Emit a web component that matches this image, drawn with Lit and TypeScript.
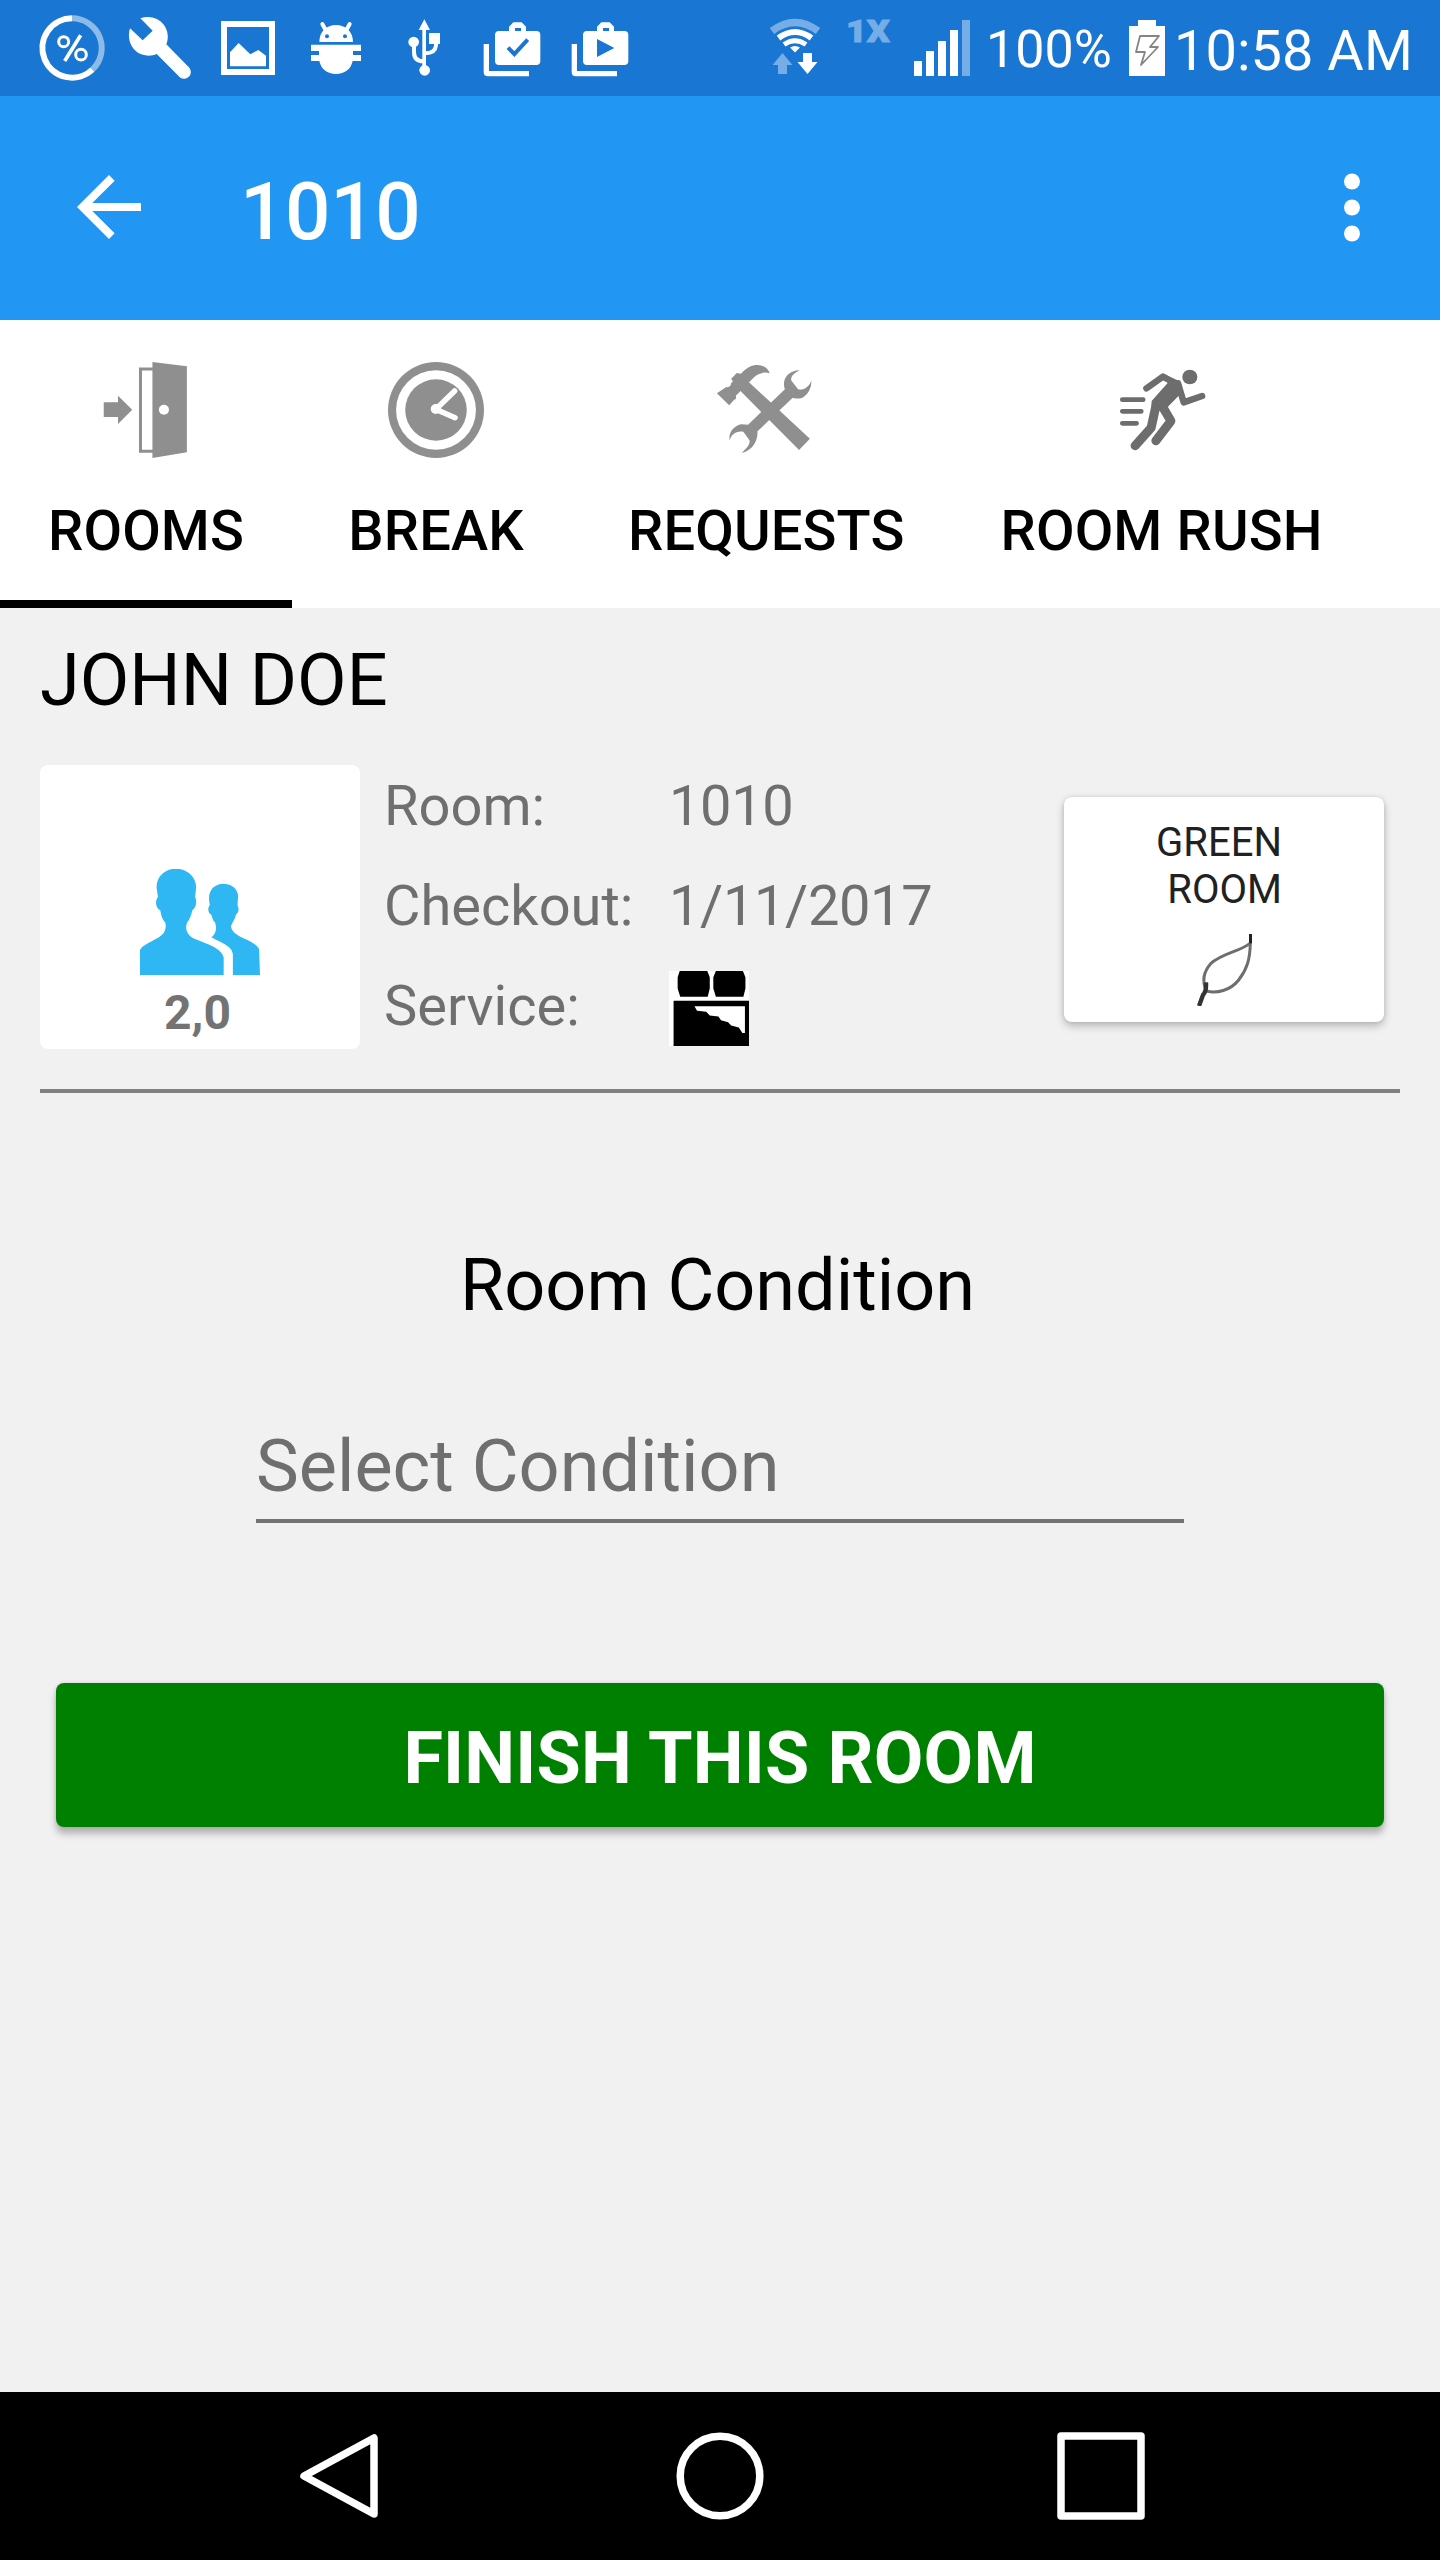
import { LitElement, html, css, svg } from "lit";
import { customElement, property } from "lit/decorators.js";
import { classMap } from "lit/directives/class-map.js";

@customElement("status-bar")
class StatusBar extends LitElement {
  static styles = css`
    :host { display: block; }
    .bar {
      display: flex;
      height: 96px;
      background: #1976d2;
      color: #fff;
      font-family: Roboto, "Liberation Sans", sans-serif;
      white-space: nowrap;
    }
    svg { display: block; flex: none; }
    .notices { display: flex; padding-left: 36px; flex: none; }
    .notices svg { margin-right: 16px; }
    .system { display: flex; margin-left: auto; padding-right: 27px; }
    .net {
      width: 50px;
      margin-left: 24px;
      padding-top: 14px;
      font-size: 31px;
      line-height: 36px;
      font-weight: 900;
      color: #76ade6;
      -webkit-text-stroke: 1px #76ade6;
      transform: scaleX(1.16);
      transform-origin: left;
    }
    .signal { margin-left: 18px; }
    .percent { width: 144px; padding-left: 16px; padding-top: 20px; font-size: 52px; line-height: 60px; box-sizing: border-box; }
    .time { width: 239px; margin-left: 8px; padding-top: 19px; font-size: 56px; line-height: 64px; }
  `;

  private bag(mark: unknown) {
    return svg`<svg width="72" height="96" viewBox="408 0 216 288">
      <path fill="#fff" fill-rule="evenodd" d="M477 93H507V80L520 67H545L558 80V93H589Q601 93 601 105V183Q601 195 589 195H477Q465 195 465 183V105Q465 93 477 93ZM525 84V93H543V84Z"/>
      <path fill="#fff" d="M431 132H447V213H567V229H444Q431 229 431 216Z"/>
      ${mark}
    </svg>`;
  }

  render() {
    return html`<div class="bar">
      <div class="notices">
        <svg width="72" height="96" viewBox="108 0 216 288" fill="none" stroke="#fff">
          <path d="M216 55A89 89 0 0 1 277 209" stroke-width="18" opacity=".5"/>
          <path d="M216 55A89 89 0 1 0 277 209" stroke-width="18"/>
          <circle cx="191" cy="125" r="15" stroke-width="9"/>
          <circle cx="243" cy="164" r="16" stroke-width="9"/>
          <path d="M242 106L194 183" stroke-width="11"/>
        </svg>
        <svg width="72" height="96" viewBox="372 0 216 288">
          <path fill="#fff" d="M421 55C447 45 476 53 492 75C504 92 507 114 499 133L568 203C582 224 560 244 541 233L470 162C451 171 425 168 408 154C389 138 382 110 390 85L428 121L458 92Z"/>
        </svg>
        <svg width="72" height="96" viewBox="636 0 216 288" fill="#fff">
          <path fill-rule="evenodd" d="M663 63H825V225H663ZM681 81V207H807V81Z"/>
          <path d="M690 157L716 129L751 163L775 150L798 167V199H690Z"/>
        </svg>
        <svg width="72" height="96" viewBox="900 0 216 288">
          <path fill="#fff" d="M958 126C958 94 980 75 1008 75S1059 94 1059 126Z"/>
          <path fill="none" stroke="#fff" stroke-width="12" stroke-linecap="round" d="M967 72L978 92M1049 72L1038 92"/>
          <path fill="#fff" d="M933 134H1083V153H1059V165H1083V183H1058C1053 207 1034 222 1008 222S963 207 958 183H933V165H957V153H933Z"/>
          <circle cx="981" cy="109" r="6" fill="#1976d2"/><circle cx="1035" cy="109" r="6" fill="#1976d2"/>
        </svg>
        <svg width="72" height="96" viewBox="144 0 216 288" fill="#fff">
          <path d="M253 58L270 90H258V200H247V90H236Z"/>
          <circle cx="254" cy="211" r="16"/><circle cx="221" cy="126" r="16"/>
          <path d="M267 99H300V132H267Z"/>
          <path fill="none" stroke="#fff" stroke-width="12" d="M222 138V156Q222 184 250 184M288 130V136Q286 159 256 160"/>
        </svg>
        ${this.bag(svg`<path fill="none" stroke="#1976d2" stroke-width="12" d="M504 143L523 162L563 119"/>`)}
        ${this.bag(svg`<path fill="#1976d2" d="M507 117L559 144L507 171Z"/>`)}
      </div>
      <div class="system">
        <svg width="54" height="96" viewBox="767 0 54 96" fill="none" stroke="#fff">
          <path d="M771 31Q794 14 817 31" stroke="#76ade6" stroke-width="7.5"/>
          <path d="M777.500 38Q794 26 810.500 38" stroke-width="6"/>
          <path d="M783 44.500Q794 37 805 44.500" stroke-width="5"/>
          <path fill="#fff" stroke="none" d="M789 47.500Q794 44.500 799 47.500L794 52.500Z"/>
          <path fill="#76ade6" stroke="none" d="M781.500 53L791.500 65H786V74H777V65H771.500Z"/>
          <path fill="#fff" stroke="none" d="M802 53H811V62H816.500L806.500 74L796.500 62H802Z"/>
        </svg>
        <div class="net">1X</div>
        <svg class="signal" width="56" height="96" viewBox="914 0 56 96" fill="#fff">
          <path d="M914 61h8v15h-8zM926 51h8v25h-8zM938 41h8v35h-8zM950 30h8v46h-8z"/>
          <path fill="#76ade6" d="M962 20h8v56h-8z"/>
        </svg>
        <div class="percent">100%</div>
        <svg width="52" height="96" viewBox="1114 0 52 96">
          <path fill="#fff" d="M1129 26h9v-6h18v6h9v50h-36z"/>
          <path fill="none" stroke="#858585" stroke-width="1.800" stroke-linejoin="round" d="M1140 36H1159L1150 47H1158L1141 65L1145 52H1136Z"/>
        </svg>
        <div class="time">10:58 AM</div>
      </div>
    </div>`;
  }
}

@customElement("tab-item")
class TabItem extends LitElement {
  @property() label = "";
  @property() icon = "";
  @property({ type: Boolean }) active = false;

  static styles = css`
    :host { display: block; flex: none; }
    .tab {
      box-sizing: border-box;
      height: 288px;
      min-width: 288px;
      padding: 42px 48px 0;
      display: flex;
      flex-direction: column;
      align-items: center;
      gap: 40px;
      border-bottom: 8px solid transparent;
      font: 500 56px/66px Roboto, "Liberation Sans", sans-serif;
      letter-spacing: .15px;
      color: #000;
      white-space: nowrap;
    }
    .active { border-bottom-color: #000; min-width: 292px; }
    svg { display: block; }
    svg * { vector-effect: non-scaling-stroke; }
  `;

  private glyph() {
    switch (this.icon) {
      case "door":
        return svg`<svg width="96" height="96" viewBox="213.5 96 209 288" preserveAspectRatio="none" fill="#8f8f8f">
          <path d="M226 217H257V197L288 239L257 282V261H226Z"/>
          <path d="M332 96L407 109V367L332 384Z"/>
          <path fill="none" stroke="#8f8f8f" stroke-width="3" d="M334 117H306V364H334"/>
          <ellipse cx="357" cy="239" rx="11" ry="15" fill="#fff"/>
        </svg>`;
      case "clock":
        return svg`<svg width="96" height="96" viewBox="845 96 209 288" preserveAspectRatio="none">
          <ellipse cx="949.5" cy="240" rx="104.500" ry="144" fill="#8f8f8f"/>
          <ellipse cx="949.5" cy="240" rx="87" ry="119" fill="#fff"/>
          <ellipse cx="949.5" cy="240" rx="67" ry="92" fill="#8f8f8f"/>
          <ellipse cx="949" cy="237" rx="11" ry="15" fill="#fff"/>
          <path fill="none" stroke="#fff" stroke-width="5.500" stroke-linecap="round" d="M990 183L949 238L991 263"/>
        </svg>`;
      case "tools":
        return svg`<svg width="96" height="96" viewBox="40.3 96 203.4 288" preserveAspectRatio="none" fill="#8f8f8f" overflow="visible">
          <path d="M38 190L58 171C65 174 68 165 68 160L72 154L68 147L80 129L89 131C101 112 112 105 124 105C139 106 147 117 150 130C139 125 127 129 119 139L106 157L235 326L212 360L88 183L78 197C80 204 78 208 74 210L64 226Z"/>
          <path d="M214 121C200 129 193 143 196 152L210 178C222 182 234 169 238 152C239 173 231 195 219 203C210 208 201 205 198 204L124 304C125 329 116 361 90 369C99 357 109 344 107 331L94 305C79 301 67 315 65 332C62 309 72 289 89 283L104 284L182 178C175 149 187 122 214 121Z"/>
        </svg>`;
      default:
        return svg`<svg width="96" height="96" viewBox="877.3 96 203.4 288" preserveAspectRatio="none" fill="none" stroke="#6d6d6d" stroke-linecap="round" stroke-linejoin="round">
          <ellipse cx="1038" cy="141" rx="16" ry="22" fill="#6d6d6d" stroke="none"/>
          <path stroke-width="4.800" d="M895 209H939M895 244H935M895 280H925"/>
          <path stroke-width="6.500" d="M946 175L981 140L1002 156M1013 160L1025 217L1064 198"/>
          <path fill="#6d6d6d" stroke="none" d="M982 132L1007 148Q1021 153 1020 174L1018 192L989 234L957 238L957 213L991 159Z"/>
          <path stroke-width="9" d="M967 222L956 293L922 347M980 230L998 273L966 332"/>
        </svg>`;
    }
  }

  render() {
    return html`<div class=${classMap({ tab: true, active: this.active })}>
      ${this.glyph()}<span>${this.label}</span>
    </div>`;
  }
}

@customElement("app-root")
class AppRoot extends LitElement {
  static styles = css`
    :host {
      display: flex;
      flex-direction: column;
      width: 1440px;
      height: 2560px;
      overflow: hidden;
      background: #f1f1f1;
      font-family: Roboto, "Liberation Sans", sans-serif;
      color: #000;
    }
    svg { display: block; flex: none; }
    .appbar {
      height: 224px;
      flex: none;
      background: #2196f3;
      display: flex;
      align-items: center;
      box-sizing: border-box;
      padding: 0 40px 2px 61px;
    }
    .title {
      flex: 1;
      margin: 0;
      padding: 9px 0 0 83px;
      font-size: 80px;
      line-height: 94px;
      font-weight: 500;
      letter-spacing: -.4px;
      color: #fff;
    }
    .tabs { display: flex; height: 288px; flex: none; background: #fff; overflow: hidden; }
    .content { flex: 1; padding: 31px 40px 0; }
    .guest { font-size: 72px; line-height: 84px; font-weight: 400; margin: 0; }
    .summary { display: flex; align-items: flex-start; margin-top: 42px; height: 328px; box-sizing: border-box; border-bottom: 4px solid #808080; }
    .guests {
      width: 320px;
      height: 284px;
      box-sizing: border-box;
      padding-top: 104px;
      border-radius: 8px;
      background: #fff;
      display: flex;
      flex-direction: column;
      align-items: center;
      gap: 10px;
      font-size: 48px;
      line-height: 56px;
      font-weight: 700;
      color: #737373;
    }
    .count { padding-right: 5px; }
    .details {
      display: grid;
      grid-template-columns: 285px auto;
      row-gap: 34px;
      margin: 8px 0 0 24px;
      font-size: 56px;
      line-height: 66px;
      color: #6f6f6f;
    }
    .value { letter-spacing: -.35px; }
    .bed { height: 66px; margin-top: -2px; }
    .green {
      width: 320px;
      height: 225px;
      box-sizing: border-box;
      margin: 32px 16px 0 auto;
      padding-top: 22px;
      border-radius: 8px;
      background: #fff;
      box-shadow: 0 4px 8px rgba(0, 0, 0, .24), 0 0 4px rgba(0, 0, 0, .1);
      display: flex;
      flex-direction: column;
      align-items: center;
      gap: 21px;
      font-size: 40px;
      line-height: 47px;
      color: #212121;
    }
    .green-label { text-align: right; padding-right: 10px; }
    .subtitle { margin: 151px 0 0; text-align: center; font-size: 72px; line-height: 84px; font-weight: 400; padding-right: 5px; }
    .select {
      margin: 97px 216px 0;
      padding-bottom: 10px;
      border-bottom: 4px solid #737373;
      font-size: 72px;
      line-height: 84px;
      color: #6f6f6f;
    }
    .finish {
      height: 144px;
      box-sizing: border-box;
      margin: 160px 16px 0;
      padding-top: 34px;
      border-radius: 8px;
      background: #008000;
      color: #fff;
      text-align: center;
      font-size: 72px;
      line-height: 84px;
      font-weight: 700;
      letter-spacing: .15px;
      box-shadow: 0 7px 7px rgba(0, 0, 0, .25), 0 0 4px rgba(0, 0, 0, .12);
    }
    .nav {
      height: 168px;
      flex: none;
      background: #000;
      display: flex;
      justify-content: center;
      align-items: center;
      gap: 284px;
    }
  `;

  render() {
    return html`
      <status-bar></status-bar>
      <header class="appbar">
        <svg width="96" height="96" viewBox="0 0 24 24" fill="#fff"><path d="M20 11H7.830l5.590-5.590L12 4l-8 8 8 8 1.410-1.410L7.830 13H20z"/></svg>
        <h1 class="title">1010</h1>
        <svg width="96" height="96" viewBox="0 0 96 96" fill="#fff"><circle cx="48" cy="22.500" r="8"/><circle cx="48" cy="48.500" r="8"/><circle cx="48" cy="74.500" r="8"/></svg>
      </header>
      <nav class="tabs">
        <tab-item icon="door" label="ROOMS" active></tab-item>
        <tab-item icon="clock" label="BREAK"></tab-item>
        <tab-item icon="tools" label="REQUESTS"></tab-item>
        <tab-item icon="run" label="ROOM RUSH"></tab-item>
      </nav>
      <main class="content">
        <h2 class="guest">JOHN DOE</h2>
        <section class="summary">
          <div class="guests">
            <svg width="120" height="106" viewBox="305 777 261 318" preserveAspectRatio="none" fill="#2eb7f2">
              <path d="M383 776C408 777 427 800 427 832L425 861C429 874 428 891 419 901C416 918 413 928 407 939C403 957 406 969 417 982C438 998 480 1008 487 1042V1095H305V1019C316 996 345 990 357 968C361 959 362 948 360 938C352 926 351 914 349 901C339 895 337 873 344 861L341 832C341 800 358 777 383 776Z"/>
              <path d="M487 821C511 822 521 847 518 868L517 886C521 895 520 908 514 913C511 930 505 939 503 949C505 984 555 988 564 1018L566 1095H507V1033C506 1007 476 995 460 982C473 970 471 948 468 937C463 931 462 920 460 914C452 909 452 893 457 885C450 846 463 822 487 821Z"/>
            </svg>
            <span class="count">2,0</span>
          </div>
          <div class="details">
            <span>Room:</span><span class="value">1010</span>
            <span>Checkout:</span><span class="value">1/11/2017</span>
            <span>Service:</span>
            <div class="bed">
              <svg width="80" height="75" viewBox="57 693 157 224" preserveAspectRatio="none">
                <path fill="#fff" d="M57 693H214V917H57Z"/>
                <path d="M78 693H132L137 712V745L133 770H79L74 745V712ZM149 693H202L207 712V745L203 770H149L144 745V712Z"/>
                <path d="M66 782H214V917H66Z"/>
                <path fill="#fff" d="M107 798H206V878H201L194 862L179 856L173 846L159 840L154 829L137 826L130 815L112 812Z"/>
              </svg>
            </div>
          </div>
          <div class="green">
            <div class="green-label">GREEN<br>ROOM</div>
            <svg width="56" height="72" viewBox="138 432 168 216" fill="none">
              <path stroke="#6e6e6e" stroke-width="9" stroke-linejoin="round" d="M301 459C272 485 218 488 182 521C160 546 157 576 169 603C200 611 241 602 266 570C291 538 300 508 301 459Z"/>
              <path stroke="#222" stroke-width="10" d="M302 432V460"/>
              <path stroke="#333" stroke-width="13" d="M168 577Q170 603 159 615L147 648"/>
            </svg>
          </div>
        </section>
        <h3 class="subtitle">Room Condition</h3>
        <div class="select">Select Condition</div>
        <div class="finish">FINISH THIS ROOM</div>
      </main>
      <footer class="nav">
        <svg width="102" height="92" viewBox="-11 -2 102 92" fill="none" stroke="#fff" stroke-width="7.500" stroke-linejoin="round"><path d="M75 6V82L5 44Z"/></svg>
        <svg width="92" height="92" viewBox="-2 -2 92 92" fill="none" stroke="#fff" stroke-width="7.500"><circle cx="44" cy="44" r="39.800"/></svg>
        <svg width="102" height="92" viewBox="-7 -2 102 92" fill="none" stroke="#fff" stroke-width="7.500" stroke-linejoin="round"><rect x="4" y="4" width="80" height="80"/></svg>
      </footer>
    `;
  }
}
